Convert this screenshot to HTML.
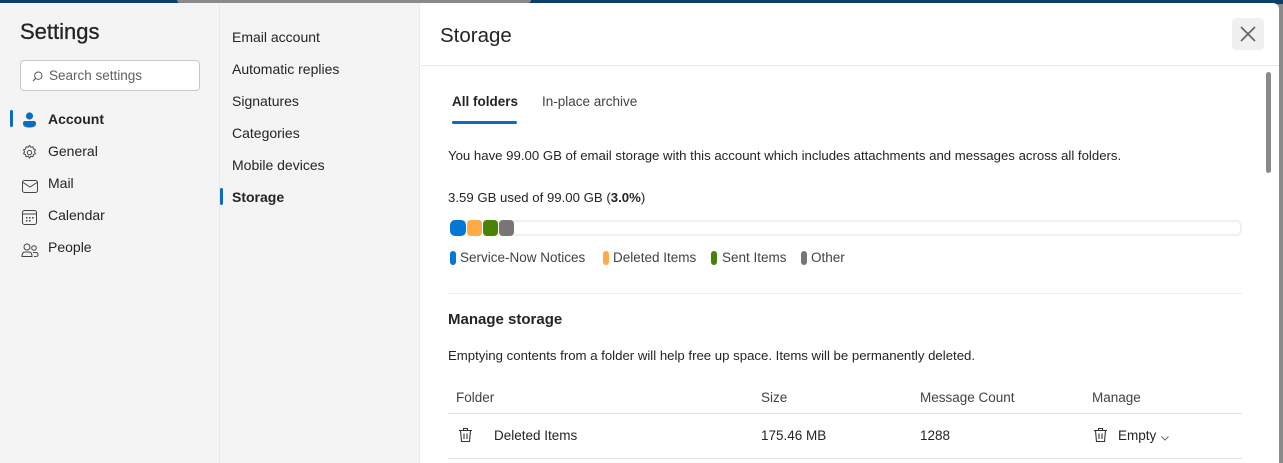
<!DOCTYPE html>
<html><head><style>
*{box-sizing:border-box;margin:0;padding:0}
body{width:1283px;height:463px;overflow:hidden;background:#8a8a8a;font-family:"Liberation Sans",sans-serif;color:#242424;position:relative}
.top{position:absolute;left:0;top:0;width:1283px;height:4px;background:#0e3e6a}
.topg{position:absolute;left:177px;top:0;width:354px;height:3px;background:#8a8a8a;border-radius:0 0 3px 3px}
.dlg{position:absolute;left:0;top:3px;width:1279px;height:460px;background:#fff;border-radius:0 6px 0 0;overflow:hidden}
.left{position:absolute;left:0;top:0;width:220px;height:460px;background:#f4f4f4;border-right:1px solid #e8e8e8}
.mid{position:absolute;left:220px;top:0;width:200px;height:460px;background:#f4f4f4;border-right:1px solid #ebebeb}
.abs{position:absolute;white-space:nowrap}
h1{position:absolute;left:20px;top:16px;font-size:22px;font-weight:normal;color:#242424;-webkit-text-stroke:.3px #242424}
.search{position:absolute;left:20px;top:57px;width:180px;height:31px;border:1px solid #c8c8c8;border-radius:4px;background:#fff;font-size:13.5px;color:#616161;padding:7px 0 0 28px}
.nav{font-size:14px;color:#242424}
.bar{position:absolute;width:3px;height:17px;background:#0f6cbd;border-radius:2px}
.t14{font-size:13.5px}
.p{font-size:13.2px}
</style></head><body>
<div class="top"></div><div class="topg"></div>
<div class="dlg">
 <div class="left">
  <h1>Settings</h1>
  <div class="search"><svg style="position:absolute;left:11px;top:10px" width="11" height="11" viewBox="0 0 11 11"><circle cx="6.3" cy="4.7" r="3.7" fill="none" stroke="#555" stroke-width="1"/><path d="M3.7 7.3L1 10" stroke="#555" stroke-width="1.1"/></svg>Search settings</div>
  <div class="bar" style="left:10px;top:107px"></div>
  <svg class="abs" style="left:22px;top:109px" width="15" height="16" viewBox="0 0 15 16"><circle cx="7.5" cy="4" r="3.6" fill="#0f6cbd"/><path d="M1 11.5Q1 9 3 9H12Q14 9 14 11.5Q14 15.5 7.5 15.5Q1 15.5 1 11.5Z" fill="#0f6cbd"/></svg>
  <div class="abs nav" style="left:48px;top:108px;font-weight:bold">Account</div>
  <svg class="abs" style="left:21px;top:141px" width="17" height="17" viewBox="0 0 17 17"><path d="M8.5 1.5l1.3 1.7 2.1-.4.5 2.1 2 .9-.9 2 .9 1.9-2 .9-.5 2.1-2.1-.4-1.3 1.7-1.3-1.7-2.1.4-.5-2.1-2-.9.9-2-.9-1.9 2-.9.5-2.1 2.1.4z" fill="none" stroke="#444" stroke-width="1"/><circle cx="8.5" cy="8.6" r="2.2" fill="none" stroke="#444"/></svg>
  <div class="abs nav" style="left:48px;top:140px">General</div>
  <svg class="abs" style="left:22px;top:177px" width="16" height="13" viewBox="0 0 16 13"><rect x=".5" y=".5" width="15" height="12" rx="2" fill="none" stroke="#444"/><path d="M1 2.5L8 7l7-4.5" fill="none" stroke="#444"/></svg>
  <div class="abs nav" style="left:48px;top:172px">Mail</div>
  <svg class="abs" style="left:22px;top:207px" width="15" height="15" viewBox="0 0 15 15"><rect x=".5" y=".5" width="14" height="14" rx="2" fill="none" stroke="#444"/><path d="M1 4h13" stroke="#444"/><g fill="#444"><rect x="4" y="7" width="1.5" height="1.5"/><rect x="7" y="7" width="1.5" height="1.5"/><rect x="10" y="7" width="1.5" height="1.5"/><rect x="4" y="10" width="1.5" height="1.5"/><rect x="7" y="10" width="1.5" height="1.5"/></g></svg>
  <div class="abs nav" style="left:48px;top:204px">Calendar</div>
  <svg class="abs" style="left:21px;top:240px" width="18" height="15" viewBox="0 0 18 15"><circle cx="6" cy="4" r="3" fill="none" stroke="#444"/><circle cx="13" cy="5" r="2.3" fill="none" stroke="#444"/><path d="M1 13.5Q1 9 4 9H8Q11 9 11 13.5Z" fill="none" stroke="#444"/><path d="M12 9.5H15Q17 9.5 17 12.5Q17 13.5 13 13.5" fill="none" stroke="#444"/></svg>
  <div class="abs nav" style="left:48px;top:236px">People</div>
 </div>
 <div class="mid">
  <div class="abs nav" style="left:12px;top:26px">Email account</div>
  <div class="abs nav" style="left:12px;top:58px">Automatic replies</div>
  <div class="abs nav" style="left:12px;top:90px">Signatures</div>
  <div class="abs nav" style="left:12px;top:122px">Categories</div>
  <div class="abs nav" style="left:12px;top:154px">Mobile devices</div>
  <div class="bar" style="left:0;top:185px"></div>
  <div class="abs nav" style="left:12px;top:186px;font-weight:bold">Storage</div>
 </div>
 <div class="abs" style="left:440px;top:21px;font-size:20.5px">Storage</div>
 <div class="abs" style="left:1232px;top:15px;width:32px;height:32px;background:#f0f0f0;border-radius:4px"><svg style="position:absolute;left:8px;top:8px" width="16" height="16" viewBox="0 0 16 16"><path d="M1 1L15 15M15 1L1 15" stroke="#616161" stroke-width="1.6"/></svg></div>
 <div class="abs" style="left:421px;top:62px;width:858px;height:1px;background:#e8e8e8"></div>
 <div class="abs" style="left:1266px;top:69px;width:5px;height:101px;background:#8a8a8a;border-radius:3px"></div>
 <div class="abs t14" style="left:452px;top:91px;font-weight:bold">All folders</div>
 <div class="abs" style="left:452px;top:118px;width:65px;height:3px;background:#0f6cbd;border-radius:2px"></div>
 <div class="abs t14" style="left:542px;top:91px;color:#424242">In-place archive</div>
 <div class="abs p" style="left:448px;top:145px">You have 99.00 GB of email storage with this account which includes attachments and messages across all folders.</div>
 <div class="abs p" style="left:448px;top:187px">3.59 GB used of 99.00 GB (<b>3.0%</b>)</div>
 <div class="abs" style="left:450px;top:217px;width:792px;height:16px;border:2px solid #f0f0f0;border-radius:6px"></div>
 <div class="abs" style="left:450px;top:217px;width:16px;height:16px;background:#0078d4;border-radius:5px"></div>
 <div class="abs" style="left:467px;top:217px;width:15px;height:16px;background:#ffaa44;border-radius:4px"></div>
 <div class="abs" style="left:483px;top:217px;width:15px;height:16px;background:#498205;border-radius:4px"></div>
 <div class="abs" style="left:499px;top:217px;width:15px;height:16px;background:#7a7574;border-radius:4px"></div>
 <div class="abs" style="left:450px;top:248px;width:6px;height:14px;background:#0078d4;border-radius:3px"></div>
 <div class="abs t14" style="left:460px;top:247px;color:#424242">Service-Now Notices</div>
 <div class="abs" style="left:603px;top:248px;width:6px;height:14px;background:#ffaa44;border-radius:3px"></div>
 <div class="abs t14" style="left:613px;top:247px;color:#424242">Deleted Items</div>
 <div class="abs" style="left:711px;top:248px;width:6px;height:14px;background:#498205;border-radius:3px"></div>
 <div class="abs t14" style="left:722px;top:247px;color:#424242">Sent Items</div>
 <div class="abs" style="left:801px;top:248px;width:6px;height:14px;background:#7a7574;border-radius:3px"></div>
 <div class="abs t14" style="left:811px;top:247px;color:#424242">Other</div>
 <div class="abs" style="left:448px;top:290px;width:794px;height:1px;background:#ededed"></div>
 <div class="abs" style="left:448px;top:308px;font-size:15px;font-weight:bold">Manage storage</div>
 <div class="abs p" style="left:448px;top:345px">Emptying contents from a folder will help free up space. Items will be permanently deleted.</div>
 <div class="abs t14" style="left:456px;top:387px;color:#424242">Folder</div>
 <div class="abs t14" style="left:761px;top:387px;color:#424242">Size</div>
 <div class="abs t14" style="left:920px;top:387px;color:#424242">Message Count</div>
 <div class="abs t14" style="left:1092px;top:387px;color:#424242">Manage</div>
 <div class="abs" style="left:448px;top:410px;width:794px;height:1px;background:#e0e0e0"></div>
 <svg class="abs" style="left:458px;top:424px" width="15" height="16" viewBox="0 0 15 16"><path d="M1 3.5H14M5.5 3.5V1.5H9.5V3.5M2.5 3.5L3.5 14.5H11.5L12.5 3.5M6 6.5V12M9 6.5V12" fill="none" stroke="#333" stroke-width="1.1"/></svg>
 <div class="abs t14" style="left:494px;top:425px">Deleted Items</div>
 <div class="abs t14" style="left:761px;top:425px">175.46 MB</div>
 <div class="abs t14" style="left:920px;top:425px">1288</div>
 <svg class="abs" style="left:1093px;top:424px" width="15" height="16" viewBox="0 0 15 16"><path d="M1 3.5H14M5.5 3.5V1.5H9.5V3.5M2.5 3.5L3.5 14.5H11.5L12.5 3.5M6 6.5V12M9 6.5V12" fill="none" stroke="#333" stroke-width="1.1"/></svg>
 <div class="abs t14" style="left:1118px;top:425px">Empty</div>
 <svg class="abs" style="left:1161px;top:433px" width="8" height="5" viewBox="0 0 8 5"><path d="M.5.5L4 4 7.5.5" fill="none" stroke="#666"/></svg>
 <div class="abs" style="left:448px;top:455px;width:794px;height:1px;background:#e0e0e0"></div>
</div>
</body></html>
